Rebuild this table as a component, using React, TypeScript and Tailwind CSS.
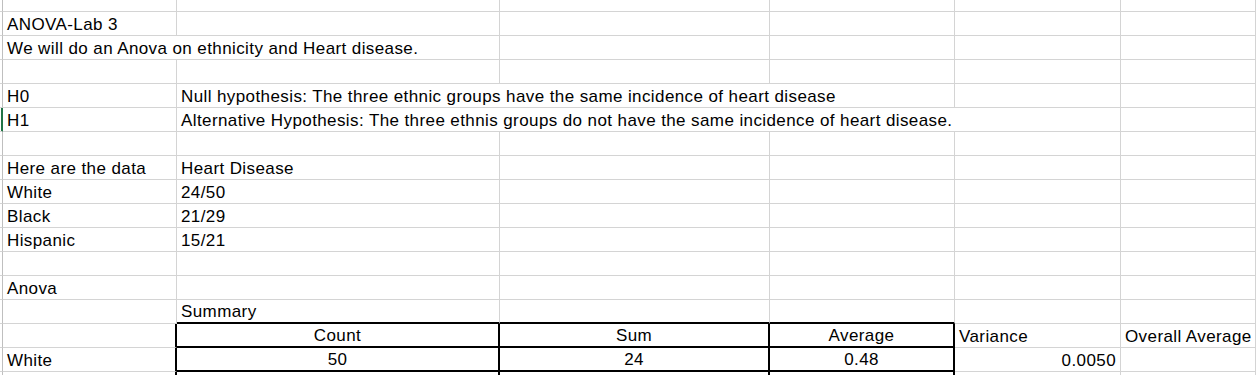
import React from "react";

type Cell = {
  text?: string;
  span?: number;
  align?: "left" | "center" | "right";
  blackRight?: boolean;
  blackBottom?: boolean;
};

type Row = {
  height: number;
  cells: Cell[];
  selected?: boolean;
};

const empty = (n: number): Cell[] => Array.from({ length: n }, () => ({}));

// columns: A, B, C, D, E, F (stub column is separate)
const rows: Row[] = [
  { height: 12, cells: empty(6) },
  { height: 24, cells: [{ text: "ANOVA-Lab 3" }, ...empty(5)] },
  {
    height: 24,
    cells: [{ text: "We will do an Anova on ethnicity and Heart disease.", span: 2 }, ...empty(4)],
  },
  { height: 24, cells: empty(6) },
  {
    height: 24,
    cells: [
      { text: "H0" },
      { text: "Null hypothesis: The three ethnic groups have the same incidence of heart disease", span: 3 },
      ...empty(2),
    ],
  },
  {
    height: 24,
    selected: true,
    cells: [
      { text: "H1" },
      {
        text: "Alternative Hypothesis: The three ethnis groups do not have the same incidence of heart disease.",
        span: 4,
      },
      ...empty(1),
    ],
  },
  { height: 24, cells: empty(6) },
  { height: 24, cells: [{ text: "Here are the data" }, { text: "Heart Disease" }, ...empty(4)] },
  { height: 24, cells: [{ text: "White" }, { text: "24/50" }, ...empty(4)] },
  { height: 24, cells: [{ text: "Black" }, { text: "21/29" }, ...empty(4)] },
  { height: 24, cells: [{ text: "Hispanic" }, { text: "15/21" }, ...empty(4)] },
  { height: 24, cells: empty(6) },
  { height: 24, cells: [{ text: "Anova" }, ...empty(5)] },
  {
    height: 24,
    cells: [
      {},
      { text: "Summary", blackBottom: true },
      { blackBottom: true },
      { blackBottom: true },
      {},
      {},
    ],
  },
  {
    height: 24,
    cells: [
      { blackRight: true },
      { text: "Count", align: "center", blackRight: true, blackBottom: true },
      { text: "Sum", align: "center", blackRight: true, blackBottom: true },
      { text: "Average", align: "center", blackRight: true, blackBottom: true },
      { text: "Variance" },
      { text: "Overall Average" },
    ],
  },
  {
    height: 24,
    cells: [
      { text: "White", blackRight: true },
      { text: "50", align: "center", blackRight: true, blackBottom: true },
      { text: "24", align: "center", blackRight: true, blackBottom: true },
      { text: "0.48", align: "center", blackRight: true, blackBottom: true },
      { text: "0.0050", align: "right" },
      {},
    ],
  },
  {
    height: 24,
    cells: [
      { blackRight: true },
      { blackRight: true },
      { blackRight: true },
      { blackRight: true },
      {},
      {},
    ],
  },
];

const spanClass: Record<number, string> = {
  1: "col-span-1",
  2: "col-span-2",
  3: "col-span-3",
  4: "col-span-4",
};

function SheetCell({ cell }: { cell: Cell }) {
  const align =
    cell.align === "center"
      ? "justify-center"
      : cell.align === "right"
      ? "justify-end pr-[4px]"
      : "justify-start pl-[4px]";
  const right = cell.blackRight ? "border-r-2 border-r-black" : "border-r border-r-[#d4d4d4]";
  const bottom = cell.blackBottom ? "border-b-2 border-b-black" : "border-b border-b-[#d4d4d4]";
  return (
    <div
      className={`${spanClass[cell.span ?? 1]} flex items-end overflow-visible whitespace-nowrap pb-[2px] leading-[17px] ${align} ${right} ${bottom}`}
    >
      {cell.text}
    </div>
  );
}

export default function App() {
  return (
    <div className="h-[375px] w-[1256px] overflow-hidden bg-white font-['Liberation_Sans',Arial,sans-serif] text-[17px] tracking-[0.4px] text-black">
      <div className="grid grid-cols-[3px_174px_323px_270px_185px_166px_135px]">
        {rows.map((row, i) => (
          <React.Fragment key={i}>
            <div
              style={{ height: row.height }}
              className={
                row.selected
                  ? "border-b border-b-[#d4d4d4] border-r border-r-[#217346] shadow-[inset_-1px_0_0_#217346]"
                  : "border-b border-b-[#d4d4d4] border-r border-r-[#bfbfbf]"
              }
            />
            {row.cells.map((cell, j) => (
              <SheetCell key={j} cell={cell} />
            ))}
          </React.Fragment>
        ))}
      </div>
    </div>
  );
}
